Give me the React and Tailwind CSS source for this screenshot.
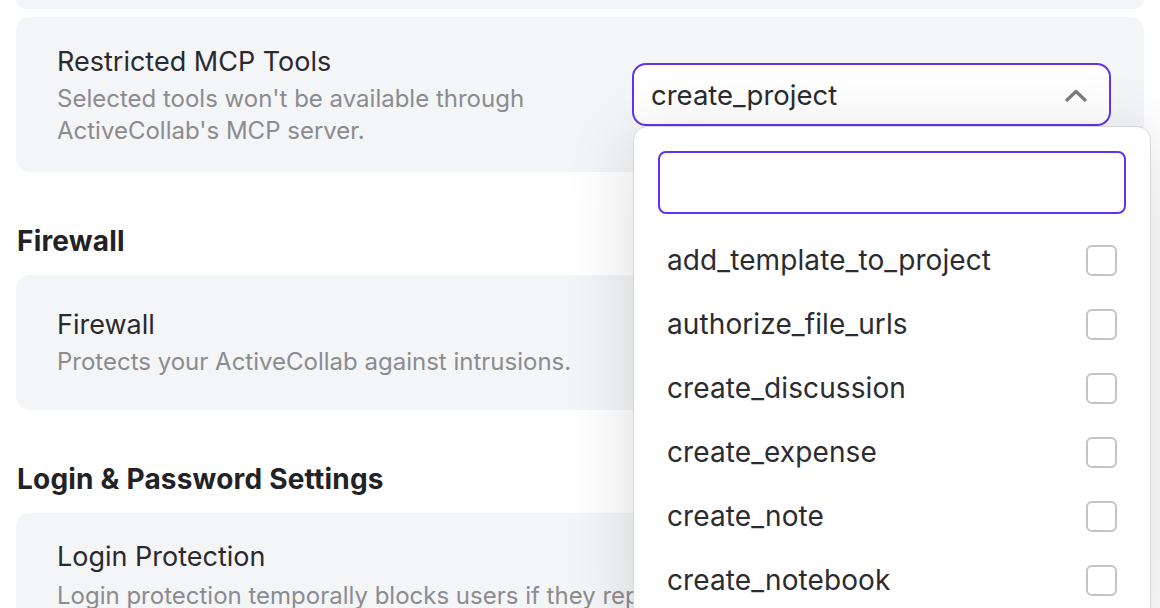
import React, { useState } from "react";

const tools = [
  "add_template_to_project",
  "authorize_file_urls",
  "create_discussion",
  "create_expense",
  "create_note",
  "create_notebook",
  "create_project",
];

const ToolOption = ({ name, checked, onToggle }) => (
  <div
    onClick={onToggle}
    className="h-16 flex items-center justify-between px-[9px] pt-[2px] cursor-pointer"
  >
    <span className="text-[28px] tracking-[0.1px] text-[#2b2b30]">{name}</span>
    <span
      className={
        "w-[31px] h-[31px] rounded-[6px] border-2 " +
        (checked ? "border-[#5f33f5] bg-[#5f33f5]" : "border-[#c4c4c8] bg-white")
      }
    />
  </div>
);

const App = () => {
  const [selected, setSelected] = useState(["create_project"]);
  const [query, setQuery] = useState("");

  const toggle = (name) => {
    setSelected(
      selected.includes(name)
        ? selected.filter((t) => t !== name)
        : [...selected, name]
    );
  };

  const visible = tools
    .filter((t) => t !== "create_project")
    .filter((t) => t.includes(query));

  return (
    <div className="w-[1160px] h-[608px] overflow-hidden bg-white font-['Inter',sans-serif] px-4">

      {/* end of the card above */}
      <div className="h-[9px] rounded-b-[14px] bg-[#f4f5f7]" />

      {/* RESTRICTED MCP TOOLS */}
      <div className="mt-2 h-[155px] rounded-[14px] bg-[#f4f5f7] flex justify-between pl-[41px] pr-[33px]">
        <div className="mt-[29px]">
          <div className="text-[27px] leading-8 text-[#2a2a2e]">Restricted MCP Tools</div>
          <div className="mt-[5px] text-[24px] leading-8 text-[#8b8b90] w-[500px]">
            Selected tools won't be available through ActiveCollab's MCP server.
          </div>
        </div>

        <div className="relative self-center w-[479px]">
          <div className="h-[63px] rounded-[14px] border-2 border-[#5f33f5] bg-white flex items-center justify-between pl-[17px] pr-[22px]">
            <span className="text-[27.5px] pt-[3px] text-[#2b2b30]">{selected.join(", ")}</span>
            <svg width="22" height="13" viewBox="0 0 22 13" fill="none" className="mt-[2px]">
              <path d="M2 11 L11 2.5 L20 11" stroke="#7a7a7e" strokeWidth="3.2" strokeLinecap="round" strokeLinejoin="round" />
            </svg>
          </div>

          {/* DROPDOWN */}
          <div className="absolute top-full left-px w-[518px] rounded-[14px] border border-[#d6d6da] bg-white shadow-[0_12px_70px_rgba(0,0,0,0.14)] px-[24px] pt-[24px] pb-4 z-10">
            <input
              value={query}
              onChange={(e) => setQuery(e.target.value)}
              className="w-full h-[63px] rounded-[8px] border-2 border-[#5f33f5] outline-none px-3 text-[24px]"
            />
            <div className="mt-[13px]">
              {visible.map((t) => (
                <ToolOption
                  key={t}
                  name={t}
                  checked={selected.includes(t)}
                  onToggle={() => toggle(t)}
                />
              ))}
            </div>
          </div>
        </div>
      </div>

      {/* FIREWALL */}
      <h2 className="mt-[53px] pl-px text-[28px] leading-8 font-bold tracking-[0.2px] text-[#222226]">Firewall</h2>
      <div className="mt-[18px] h-[135px] rounded-[14px] bg-[#f4f5f7] pl-[41px] pt-[34px]">
        <div className="text-[27px] leading-8 text-[#2a2a2e]">Firewall</div>
        <div className="mt-[5px] text-[24px] leading-8 text-[#8b8b90]">
          Protects your ActiveCollab against intrusions.
        </div>
      </div>

      {/* LOGIN & PASSWORD */}
      <h2 className="mt-[53px] pl-px text-[28px] leading-8 font-bold tracking-[0.2px] text-[#222226]">Login &amp; Password Settings</h2>
      <div className="mt-[18px] h-[135px] rounded-[14px] bg-[#f4f5f7] pl-[41px] pt-[28px]">
        <div className="text-[27px] leading-8 text-[#2a2a2e]">Login Protection</div>
        <div className="mt-[7px] w-[576px] overflow-hidden text-[24px] leading-8 text-[#8b8b90] whitespace-nowrap">
          Login protection temporally blocks users if they repeatedly fail to log in.
        </div>
      </div>

    </div>
  );
};

export default App;
